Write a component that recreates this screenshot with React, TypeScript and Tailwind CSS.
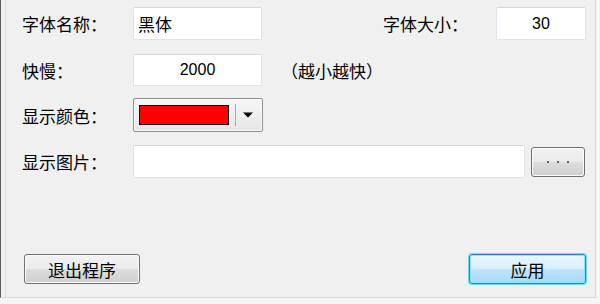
import React from 'react';

const font = { fontFamily: '"Noto Sans CJK SC", "Noto Sans", sans-serif' };

function TextBox({ value, w }: { value?: string; w: string }) {
  return (
    <div
      className={`${w} flex h-[33px] items-center rounded-[2px] border border-[#e2e3ea] border-t-[#d4d6db] bg-white px-[4px] text-[17px] leading-none text-black`}
    >
      {value}
    </div>
  );
}

function WinButton({ children, w, primary }: { children: React.ReactNode; w: string; primary?: boolean }) {
  return primary ? (
    <button
      className={`${w} flex h-[30px] items-center justify-center rounded-[3px] border border-[#3c7fb1] bg-[linear-gradient(#eaf6fd_0%,#d9f0fc_50%,#bee6fd_51%,#a7d9f5_100%)] text-[17px] leading-none text-black shadow-[0_0_0_1px_#6fd6f6,inset_0_0_0_1px_#8fe1fb]`}
    >
      {children}
    </button>
  ) : (
    <button
      className={`${w} flex h-[30px] items-center justify-center rounded-[3px] border border-[#707070] bg-[linear-gradient(#f2f2f2_0%,#ebebeb_50%,#dddddd_51%,#cfcfcf_100%)] text-[17px] leading-none text-black shadow-[inset_0_0_0_1px_#fcfcfc]`}
    >
      {children}
    </button>
  );
}

function Label({ children }: { children: React.ReactNode }) {
  return <span className="w-[111px] shrink-0 text-[17px] leading-none text-black">{children}</span>;
}

export default function App() {
  return (
    <div className="h-[304px] w-[600px] bg-[#f5f5f5]" style={font}>
      <div className="flex h-[298px] w-[596px] flex-col border-b border-l border-r border-b-[#d8d8d8] border-l-[#5a5a5a] border-r-[#d8d8d8] bg-[#f0f0f0] pl-[21px] pt-[7px] shadow-[inset_4px_0_0_#f0f0f0,inset_5px_0_0_#cfe2f3]">
        {/* 字体名称 / 字体大小 */}
        <div className="flex h-[33px] items-center">
          <Label>字体名称：</Label>
          <TextBox value="黑体" w="w-[129px]" />
          <span className="ml-[121px] w-[113px] shrink-0 text-[17px] leading-none text-black">字体大小：</span>
          <div
            className="flex h-[33px] w-[90px] items-center justify-center rounded-[2px] border border-[#e2e3ea] border-t-[#d4d6db] bg-white text-[16px] leading-none text-black"
            style={{ fontFamily: '"Liberation Sans", sans-serif' }}
          >
            30
          </div>
        </div>

        {/* 快慢 */}
        <div className="mt-[14px] flex h-[32px] items-center">
          <Label>快慢：</Label>
          <div
            className="flex h-[32px] w-[129px] items-center justify-center rounded-[2px] border border-[#e2e3ea] border-t-[#d4d6db] bg-white text-[16px] leading-none text-black"
            style={{ fontFamily: '"Liberation Sans", sans-serif' }}
          >
            2000
          </div>
          <span className="ml-[19px] text-[17px] leading-none text-black">（越小越快）</span>
        </div>

        {/* 显示颜色 */}
        <div className="mt-[12px] flex h-[34px] items-center">
          <Label>显示颜色：</Label>
          <div className="flex h-[34px] w-[130px] items-center rounded-[2px] border border-[#8e8f8f] bg-[linear-gradient(#f6f6f6,#e6e6e6)] pl-[5px] shadow-[inset_0_0_0_1px_#fbfbfb]">
            <div className="h-[20px] w-[90px] border border-black bg-[#ff0000]" />
            <div className="ml-[6px] h-[22px] w-px bg-[#a8a8a8]" />
            <svg className="ml-[6px]" width="12" height="8" viewBox="0 0 12 8">
              <path d="M1 1.5h10L6 6.5z" fill="#000" />
            </svg>
          </div>
        </div>

        {/* 显示图片 */}
        <div className="mt-[13px] flex h-[33px] items-center">
          <Label>显示图片：</Label>
          <TextBox w="w-[392px]" />
          <button className="ml-[6px] flex h-[30px] w-[54px] items-center justify-center gap-[8px] rounded-[3px] border border-[#707070] bg-[linear-gradient(#f2f2f2_0%,#ebebeb_50%,#dddddd_51%,#cfcfcf_100%)] shadow-[inset_0_0_0_1px_#fcfcfc]">
            <span className="h-[2px] w-[2px] bg-[#666]" />
            <span className="h-[2px] w-[2px] bg-[#666]" />
            <span className="h-[2px] w-[2px] bg-[#666]" />
          </button>
        </div>

        {/* 底部按钮 */}
        <div className="ml-[2px] mt-[76px] flex w-[562px] items-center justify-between">
          <WinButton w="w-[116px]">退出程序</WinButton>
          <WinButton w="w-[117px]" primary>
            应用
          </WinButton>
        </div>
      </div>
    </div>
  );
}
